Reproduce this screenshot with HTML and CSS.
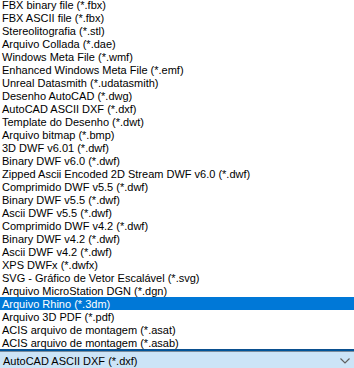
FILE: index.html
```html
<!DOCTYPE html>
<html>
  <head>
    <title>Formato de arquivo</title>
    <link rel="stylesheet" href="styles.css">
  </head>
  <body>
    <div class="combo">
      <ul class="dropList">
        <li>FBX binary file (*.fbx)</li>
        <li>FBX ASCII file (*.fbx)</li>
        <li>Stereolitografia (*.stl)</li>
        <li>Arquivo Collada (*.dae)</li>
        <li>Windows Meta File (*.wmf)</li>
        <li>Enhanced Windows Meta File (*.emf)</li>
        <li>Unreal Datasmith (*.udatasmith)</li>
        <li>Desenho AutoCAD (*.dwg)</li>
        <li>AutoCAD ASCII DXF (*.dxf)</li>
        <li>Template do Desenho (*.dwt)</li>
        <li>Arquivo bitmap (*.bmp)</li>
        <li>3D DWF v6.01 (*.dwf)</li>
        <li>Binary DWF v6.0 (*.dwf)</li>
        <li>Zipped Ascii Encoded 2D Stream DWF v6.0 (*.dwf)</li>
        <li>Comprimido DWF v5.5 (*.dwf)</li>
        <li>Binary DWF v5.5 (*.dwf)</li>
        <li>Ascii DWF v5.5 (*.dwf)</li>
        <li>Comprimido DWF v4.2 (*.dwf)</li>
        <li>Binary DWF v4.2 (*.dwf)</li>
        <li>Ascii DWF v4.2 (*.dwf)</li>
        <li>XPS DWFx (*.dwfx)</li>
        <li>SVG - Gráfico de Vetor Escalável (*.svg)</li>
        <li>Arquivo MicroStation DGN (*.dgn)</li>
        <li class="selected">Arquivo Rhino (*.3dm)</li>
        <li>Arquivo 3D PDF (*.pdf)</li>
        <li>ACIS arquivo de montagem (*.asat)</li>
        <li>ACIS arquivo de montagem (*.asab)</li>
      </ul>
      <div class="comboBox">
        <span class="comboValue">AutoCAD ASCII DXF (*.dxf)</span>
        <svg class="chevron" width="10" height="6" viewBox="0 0 10 6">
          <polyline points="0.5,0.5 5,5 9.5,0.5" fill="none" stroke="#606060" stroke-width="1.2" />
        </svg>
      </div>
    </div>
  </body>
</html>
```

FILE: styles.css
```css
body {
  margin: 0;
  background-color: #ffffff;
  font-family: "Liberation Sans", Arial, sans-serif;
  font-size: 11px;
  color: #000000;
  overflow: hidden;
}
.combo {
  display: flex;
  flex-direction: column;
  width: 354px;
  height: 368px;
  overflow: hidden;
}
.dropList {
  list-style: none;
  margin: 0;
  padding: 0;
  border-bottom: 1px solid #0a4f8f;
}
.dropList li {
  box-sizing: border-box;
  height: 13px;
  line-height: 12px;
  padding: 1px 0 0 2px;
  white-space: nowrap;
}
/* first row is partly scrolled out of view */
.dropList li:first-child {
  height: 11px;
  line-height: 11px;
  padding-top: 0;
}
.dropList li.selected {
  background-color: #0078d7;
  color: #ffffff;
}
.comboBox {
  display: flex;
  align-items: center;
  justify-content: space-between;
  height: 20px;
  padding: 0 4px 0 3px;
  background-color: #cce4f7;
  border-top: 1px solid #005499;
  box-shadow: inset 0 1px 0 #7b8c9c;
}
.comboValue {
  padding-top: 2px;
}
.chevron {
  margin-top: 2px;
}
```
